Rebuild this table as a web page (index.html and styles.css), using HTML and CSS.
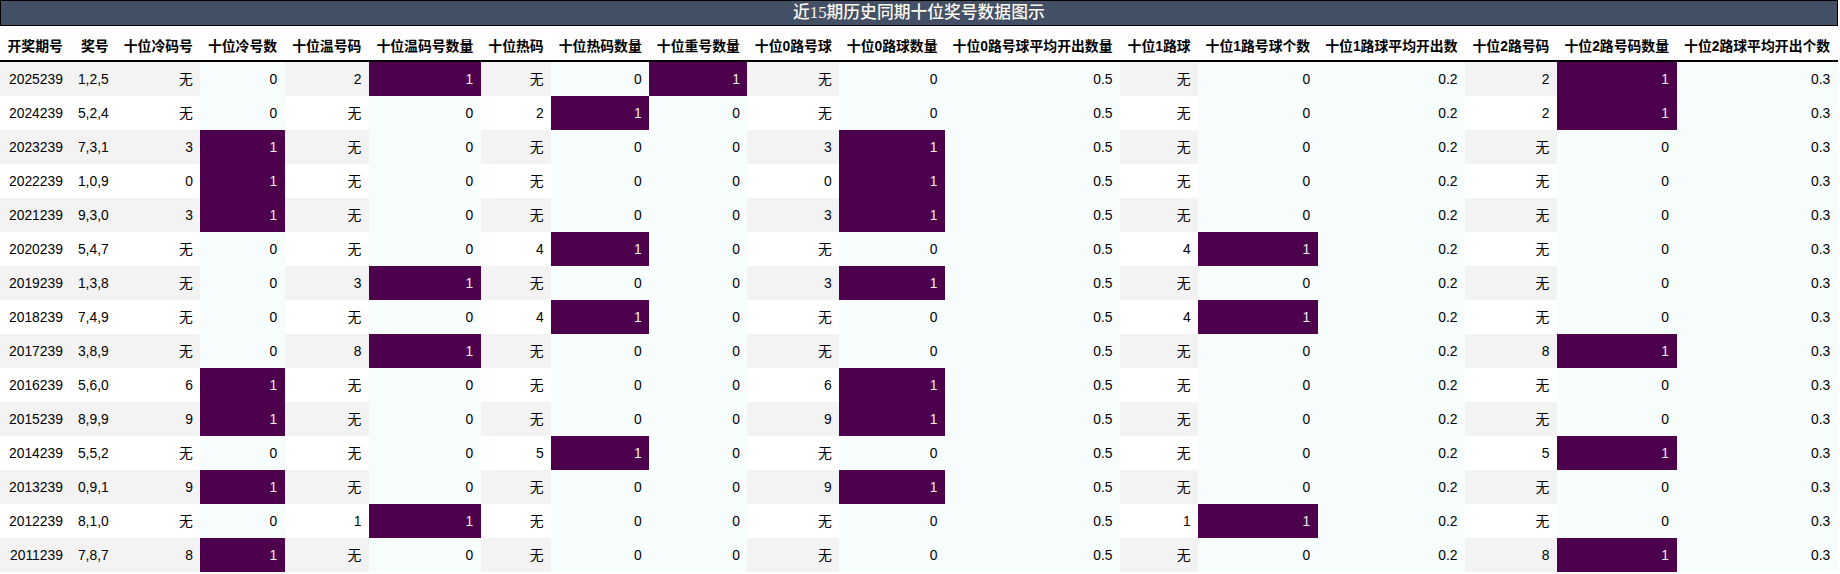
FILE: index.html
```html
<!DOCTYPE html>
<html lang="zh">
<head>
<meta charset="utf-8">
<title>近15期历史同期十位奖号数据图示</title>
<link rel="stylesheet" href="styles.css">
</head>
<body>
<div class="board">
  <div class="title">近15期历史同期十位奖号数据图示</div>
  <table class="data">
    <thead>
      <tr>
        <th>开奖期号</th><th>奖号</th><th>十位冷码号</th><th>十位冷号数</th><th>十位温号码</th><th>十位温码号数量</th><th>十位热码</th><th>十位热码数量</th><th>十位重号数量</th><th>十位0路号球</th><th>十位0路球数量</th><th>十位0路号球平均开出数量</th><th>十位1路球</th><th>十位1路号球个数</th><th>十位1路球平均开出数</th><th>十位2路号码</th><th>十位2路号码数量</th><th>十位2路球平均开出个数</th>
      </tr>
    </thead>
    <tbody>
      <tr><td class="s">2025239</td><td class="s">1,2,5</td><td class="s">无</td><td class="g">0</td><td class="s">2</td><td class="h">1</td><td class="s">无</td><td class="g">0</td><td class="h">1</td><td class="s">无</td><td class="g">0</td><td class="g">0.5</td><td class="s">无</td><td class="g">0</td><td class="g">0.2</td><td class="s">2</td><td class="h">1</td><td class="g">0.3</td></tr>
      <tr><td class="s">2024239</td><td class="s">5,2,4</td><td class="s">无</td><td class="g">0</td><td class="s">无</td><td class="g">0</td><td class="s">2</td><td class="h">1</td><td class="g">0</td><td class="s">无</td><td class="g">0</td><td class="g">0.5</td><td class="s">无</td><td class="g">0</td><td class="g">0.2</td><td class="s">2</td><td class="h">1</td><td class="g">0.3</td></tr>
      <tr><td class="s">2023239</td><td class="s">7,3,1</td><td class="s">3</td><td class="h">1</td><td class="s">无</td><td class="g">0</td><td class="s">无</td><td class="g">0</td><td class="g">0</td><td class="s">3</td><td class="h">1</td><td class="g">0.5</td><td class="s">无</td><td class="g">0</td><td class="g">0.2</td><td class="s">无</td><td class="g">0</td><td class="g">0.3</td></tr>
      <tr><td class="s">2022239</td><td class="s">1,0,9</td><td class="s">0</td><td class="h">1</td><td class="s">无</td><td class="g">0</td><td class="s">无</td><td class="g">0</td><td class="g">0</td><td class="s">0</td><td class="h">1</td><td class="g">0.5</td><td class="s">无</td><td class="g">0</td><td class="g">0.2</td><td class="s">无</td><td class="g">0</td><td class="g">0.3</td></tr>
      <tr><td class="s">2021239</td><td class="s">9,3,0</td><td class="s">3</td><td class="h">1</td><td class="s">无</td><td class="g">0</td><td class="s">无</td><td class="g">0</td><td class="g">0</td><td class="s">3</td><td class="h">1</td><td class="g">0.5</td><td class="s">无</td><td class="g">0</td><td class="g">0.2</td><td class="s">无</td><td class="g">0</td><td class="g">0.3</td></tr>
      <tr><td class="s">2020239</td><td class="s">5,4,7</td><td class="s">无</td><td class="g">0</td><td class="s">无</td><td class="g">0</td><td class="s">4</td><td class="h">1</td><td class="g">0</td><td class="s">无</td><td class="g">0</td><td class="g">0.5</td><td class="s">4</td><td class="h">1</td><td class="g">0.2</td><td class="s">无</td><td class="g">0</td><td class="g">0.3</td></tr>
      <tr><td class="s">2019239</td><td class="s">1,3,8</td><td class="s">无</td><td class="g">0</td><td class="s">3</td><td class="h">1</td><td class="s">无</td><td class="g">0</td><td class="g">0</td><td class="s">3</td><td class="h">1</td><td class="g">0.5</td><td class="s">无</td><td class="g">0</td><td class="g">0.2</td><td class="s">无</td><td class="g">0</td><td class="g">0.3</td></tr>
      <tr><td class="s">2018239</td><td class="s">7,4,9</td><td class="s">无</td><td class="g">0</td><td class="s">无</td><td class="g">0</td><td class="s">4</td><td class="h">1</td><td class="g">0</td><td class="s">无</td><td class="g">0</td><td class="g">0.5</td><td class="s">4</td><td class="h">1</td><td class="g">0.2</td><td class="s">无</td><td class="g">0</td><td class="g">0.3</td></tr>
      <tr><td class="s">2017239</td><td class="s">3,8,9</td><td class="s">无</td><td class="g">0</td><td class="s">8</td><td class="h">1</td><td class="s">无</td><td class="g">0</td><td class="g">0</td><td class="s">无</td><td class="g">0</td><td class="g">0.5</td><td class="s">无</td><td class="g">0</td><td class="g">0.2</td><td class="s">8</td><td class="h">1</td><td class="g">0.3</td></tr>
      <tr><td class="s">2016239</td><td class="s">5,6,0</td><td class="s">6</td><td class="h">1</td><td class="s">无</td><td class="g">0</td><td class="s">无</td><td class="g">0</td><td class="g">0</td><td class="s">6</td><td class="h">1</td><td class="g">0.5</td><td class="s">无</td><td class="g">0</td><td class="g">0.2</td><td class="s">无</td><td class="g">0</td><td class="g">0.3</td></tr>
      <tr><td class="s">2015239</td><td class="s">8,9,9</td><td class="s">9</td><td class="h">1</td><td class="s">无</td><td class="g">0</td><td class="s">无</td><td class="g">0</td><td class="g">0</td><td class="s">9</td><td class="h">1</td><td class="g">0.5</td><td class="s">无</td><td class="g">0</td><td class="g">0.2</td><td class="s">无</td><td class="g">0</td><td class="g">0.3</td></tr>
      <tr><td class="s">2014239</td><td class="s">5,5,2</td><td class="s">无</td><td class="g">0</td><td class="s">无</td><td class="g">0</td><td class="s">5</td><td class="h">1</td><td class="g">0</td><td class="s">无</td><td class="g">0</td><td class="g">0.5</td><td class="s">无</td><td class="g">0</td><td class="g">0.2</td><td class="s">5</td><td class="h">1</td><td class="g">0.3</td></tr>
      <tr><td class="s">2013239</td><td class="s">0,9,1</td><td class="s">9</td><td class="h">1</td><td class="s">无</td><td class="g">0</td><td class="s">无</td><td class="g">0</td><td class="g">0</td><td class="s">9</td><td class="h">1</td><td class="g">0.5</td><td class="s">无</td><td class="g">0</td><td class="g">0.2</td><td class="s">无</td><td class="g">0</td><td class="g">0.3</td></tr>
      <tr><td class="s">2012239</td><td class="s">8,1,0</td><td class="s">无</td><td class="g">0</td><td class="s">1</td><td class="h">1</td><td class="s">无</td><td class="g">0</td><td class="g">0</td><td class="s">无</td><td class="g">0</td><td class="g">0.5</td><td class="s">1</td><td class="h">1</td><td class="g">0.2</td><td class="s">无</td><td class="g">0</td><td class="g">0.3</td></tr>
      <tr><td class="s">2011239</td><td class="s">7,8,7</td><td class="s">8</td><td class="h">1</td><td class="s">无</td><td class="g">0</td><td class="s">无</td><td class="g">0</td><td class="g">0</td><td class="s">无</td><td class="g">0</td><td class="g">0.5</td><td class="s">无</td><td class="g">0</td><td class="g">0.2</td><td class="s">8</td><td class="h">1</td><td class="g">0.3</td></tr>
    </tbody>
  </table>
</div>
</body>
</html>
```

FILE: styles.css
```css
html, body {
  margin: 0;
  padding: 0;
  background: #ffffff;
}

.board {
  display: inline-flex;
  flex-direction: column;
  font-family: "Liberation Sans", Arial, "Noto Sans CJK SC", sans-serif;
  color: #000000;
}

.title {
  background: #435065;
  border: 1px solid #000000;
  color: #fbf8ee;
  font-family: "Liberation Serif", "Noto Sans CJK SC", serif;
  font-size: 16.8px;
  font-weight: 500;
  line-height: 24px;
  text-align: center;
}

.data {
  border-collapse: collapse;
  font-size: 13.85px;
}

.data th {
  font-weight: bold;
  text-align: right;
  white-space: nowrap;
  padding: 12px 7.5px 6px;
  line-height: 16px;
  border-bottom: 2px solid #000000;
  background: #ffffff;
}

.data td {
  text-align: right;
  white-space: nowrap;
  padding: 7px 7.5px;
  line-height: 20px;
}

.data tbody tr:nth-child(odd) td.s {
  background: #f3f3f3;
}

.data tbody tr:nth-child(even) td.s {
  background: #ffffff;
}

.data td.g {
  background: #f7fcfd;
  color: #000000;
}

.data td.h {
  background: #4d004b;
  color: #f1f1f1;
}
```
